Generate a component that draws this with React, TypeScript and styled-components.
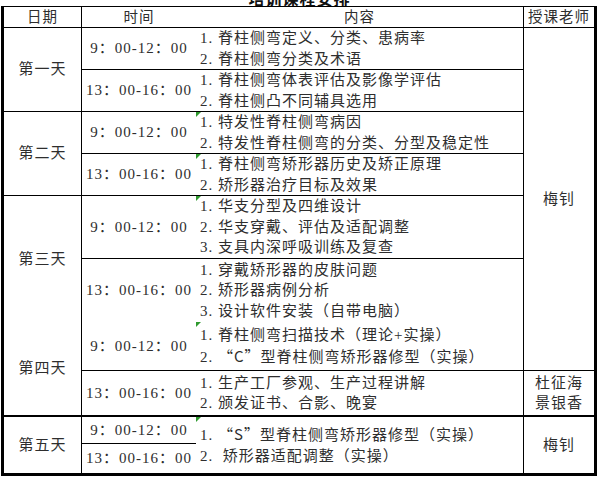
import React from "react";
import styled, { createGlobalStyle } from "styled-components";

const GlobalStyle = createGlobalStyle`
  html, body {
    margin: 0;
    padding: 0;
    background: #fff;
  }

  body {
    font-family: "Liberation Serif", "Noto Sans CJK SC", serif;
    color: #2e2e2e;
  }
`;

const Page = styled.div`
  width: 600px;
  height: 477px;
  overflow: hidden;
  padding-left: 1px;
  box-sizing: border-box;
`;

const TitleStrip = styled.div`
  width: 597px;
  height: 6px;
  overflow: hidden;
  display: flex;
  align-items: flex-end;
  justify-content: center;
`;

const Title = styled.div`
  flex-shrink: 0;
  font-family: "Noto Sans CJK SC", sans-serif;
  font-size: 16px;
  font-weight: bold;
  line-height: 15px;
  letter-spacing: 1px;
  white-space: nowrap;
  color: #111;
`;

const Table = styled.div`
  display: grid;
  grid-template-columns: 77px 115px 327px 71px;
  grid-template-rows: 20px 42px 42px 42px 42px 63px 64px 48px 45px 28px 30px;
  width: 590px;
  border: 3px solid #000;
  border-top-width: 1px;
  font-size: 15px;
  letter-spacing: 1px;
`;

interface CellProps {
  $col: number;
  $row: string;
  $top?: number;
  $left?: boolean;
}

const Cell = styled.div<CellProps>`
  box-sizing: border-box;
  position: relative;
  grid-column: ${(p) => p.$col};
  grid-row: ${(p) => p.$row};
  border-top: ${(p) => p.$top ?? 1}px solid #000;
  border-left: ${(p) => (p.$left ? "1px solid #000" : "none")};
  display: flex;
  flex-direction: column;
  align-items: center;
  justify-content: center;
  white-space: pre;
  line-height: 20.5px;
`;

const ContentCell = styled(Cell)<{ $flag?: boolean }>`
  align-items: flex-start;
  padding-left: 4px;

  &::before {
    content: "";
    display: ${(p) => (p.$flag ? "block" : "none")};
    position: absolute;
    top: 0;
    left: 0;
    border-top: 5px solid #2f9a2f;
    border-right: 5px solid transparent;
  }
`;

const HeaderText = styled.span`
  font-size: 14.5px;
  line-height: 19px;
`;

const Quote = styled.span`
  font-family: "Noto Sans CJK SC", sans-serif;
`;

const days = [
  { label: "第一天", row: "2 / 4" },
  { label: "第二天", row: "4 / 6" },
  { label: "第三天", row: "6 / 8" },
  { label: "第四天", row: "8 / 10", top: 0 },
  { label: "第五天", row: "10 / 12", top: 2 },
];

const AM = "9：00-12：00";
const PM = "13：00-16：00";

const times = [AM, PM, AM, PM, AM, PM, AM, PM, AM, PM];

const topFor = (row: number): number => (row === 8 ? 0 : row === 10 ? 2 : 1);

const contents: {
  row: string;
  top?: number;
  flag?: boolean;
  lines: React.ReactNode[];
}[] = [
  { row: "2", lines: ["1. 脊柱侧弯定义、分类、患病率", "2. 脊柱侧弯分类及术语"] },
  { row: "3", lines: ["1. 脊柱侧弯体表评估及影像学评估", "2. 脊柱侧凸不同辅具选用"] },
  {
    row: "4",
    flag: true,
    lines: ["1. 特发性脊柱侧弯病因", "2. 特发性脊柱侧弯的分类、分型及稳定性"],
  },
  {
    row: "5",
    flag: true,
    lines: ["1. 脊柱侧弯矫形器历史及矫正原理", "2. 矫形器治疗目标及效果"],
  },
  {
    row: "6",
    flag: true,
    lines: [
      "1. 华支分型及四维设计",
      "2. 华支穿戴、评估及适配调整",
      "3. 支具内深呼吸训练及复查",
    ],
  },
  {
    row: "7",
    lines: [
      "1. 穿戴矫形器的皮肤问题",
      "2. 矫形器病例分析",
      "3. 设计软件安装（自带电脑）",
    ],
  },
  {
    row: "8",
    top: 0,
    flag: true,
    lines: [
      "1. 脊柱侧弯扫描技术（理论+实操）",
      <>
        2. <Quote>“C”</Quote>型脊柱侧弯矫形器修型（实操）
      </>,
    ],
  },
  { row: "9", lines: ["1. 生产工厂参观、生产过程讲解", "2. 颁发证书、合影、晚宴"] },
  {
    row: "10 / 12",
    top: 2,
    flag: true,
    lines: [
      <>
        1. <Quote>“S”</Quote>型脊柱侧弯矫形器修型（实操）
      </>,
      "2.  矫形器适配调整（实操）",
    ],
  },
];

const teachers = [
  { row: "2 / 9", names: ["梅钊"] },
  { row: "9 / 10", names: ["杜征海", "景银香"] },
  { row: "10 / 12", names: ["梅钊"], top: 2 },
];

export default function App() {
  return (
    <Page lang="zh-CN">
      <GlobalStyle />
      <TitleStrip>
        <Title>培训课程安排</Title>
      </TitleStrip>
      <Table>
        <Cell $col={1} $row="1" $top={0}>
          <HeaderText>日期</HeaderText>
        </Cell>
        <Cell $col={2} $row="1" $top={0} $left>
          <HeaderText>时间</HeaderText>
        </Cell>
        <Cell $col={3} $row="1" $top={0}>
          <HeaderText>内容</HeaderText>
        </Cell>
        <Cell $col={4} $row="1" $top={0} $left>
          <HeaderText>授课老师</HeaderText>
        </Cell>

        {days.map((d) => (
          <Cell key={d.label} $col={1} $row={d.row} $top={d.top}>
            {d.label}
          </Cell>
        ))}

        {times.map((t, i) => (
          <Cell key={i} $col={2} $row={String(i + 2)} $top={topFor(i + 2)} $left>
            {t}
          </Cell>
        ))}

        {contents.map((c) => (
          <ContentCell key={c.row} $col={3} $row={c.row} $top={c.top} $flag={c.flag}>
            {c.lines.map((line, i) => (
              <div key={i}>{line}</div>
            ))}
          </ContentCell>
        ))}

        {teachers.map((t) => (
          <Cell key={t.row} $col={4} $row={t.row} $top={t.top} $left>
            {t.names.map((n) => (
              <div key={n}>{n}</div>
            ))}
          </Cell>
        ))}
      </Table>
    </Page>
  );
}
